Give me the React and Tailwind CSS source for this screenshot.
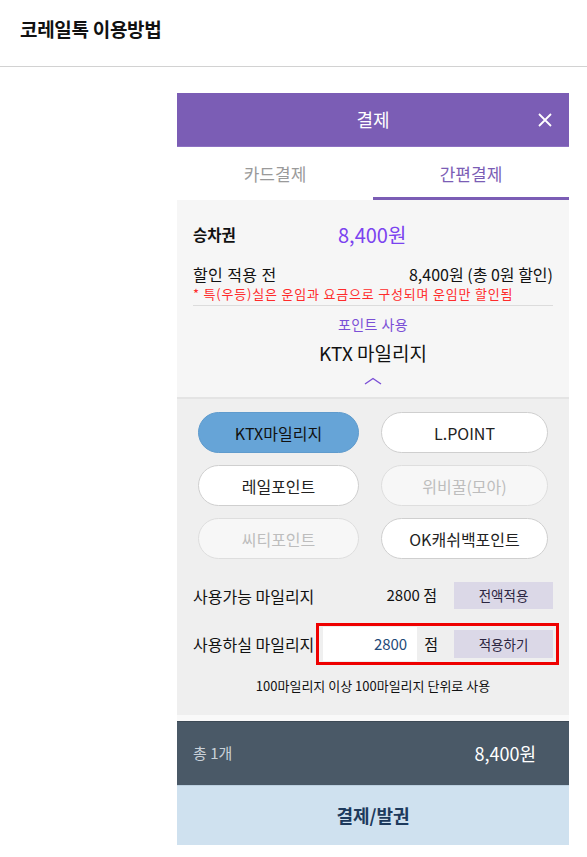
import React from "react";

const font = { fontFamily: '"Noto Sans CJK KR", "Noto Sans", sans-serif' };

function PointButton({ label, active, disabled }) {
  let cls = "bg-white border-[#cfcfcf] text-[#222]";
  if (active) cls = "bg-[#66a4d7] border-[#5f9bcd] text-[#111]";
  if (disabled) cls = "bg-[#f7f7f7] border-[#dedede] text-[#bdbdbd]";
  return (
    <div className={"h-[41px] rounded-full border flex items-center justify-center text-[16px] " + cls}>
      {label}
    </div>
  );
}

export default function App() {
  return (
    <div className="bg-white min-h-[857px] w-[587px]" style={font}>
      <div className="h-[67px] border-b border-[#d2d2d2] pl-[20px] pt-[14px]">
        <h1 className="text-[19px] font-bold text-[#111] leading-[30px] tracking-[-0.3px]">코레일톡 이용방법</h1>
      </div>

      <div className="mt-[26px] ml-[177px] w-[392px]">
        <div className="h-[54px] bg-[#7b5db5] border-b border-[#8d72c2] flex items-center justify-center relative">
          <span className="text-white text-[18px]">결제</span>
          <svg className="absolute right-[16px] top-[19px]" width="16" height="16" viewBox="0 0 16 16">
            <path d="M2 2 L14 14 M14 2 L2 14" stroke="white" strokeWidth="1.8" />
          </svg>
        </div>

        <div className="h-[53px] bg-white flex">
          <div className="flex-1 flex items-center justify-center text-[17px] text-[#9a9a9a]">카드결제</div>
          <div className="flex-1 flex items-center justify-center text-[17px] text-[#7b5db5] border-b-[3px] border-[#7b5db5] pt-[3px]">간편결제</div>
        </div>

        <div className="bg-[#f6f6f6] px-4 pt-[20px] pb-[12px] border-b-2 border-[#e4e4e4]">
          <div className="flex items-center h-[30px]">
            <span className="text-[15.5px] font-bold text-[#111] w-[145px]">승차권</span>
            <span className="text-[20px] text-[#7b43f0]">8,400원</span>
          </div>
          <div className="flex items-center justify-between mt-[14px] h-[20px] text-[16px] text-[#111]">
            <span className="tracking-[0.4px]">할인 적용 전</span>
            <span>8,400원 (총 0원 할인)</span>
          </div>
          <div className="text-[13px] text-[#ff2b2b] leading-[18px] tracking-[0.8px] mt-[1px]">* 특(우등)실은 운임과 요금으로 구성되며 운임만 할인됨</div>
          <div className="border-b border-[#dcdcdc] mt-[2px]"></div>
          <div className="text-center text-[14px] text-[#7b4fd6] mt-[9px] leading-[18px] tracking-[0.4px]">포인트 사용</div>
          <div className="text-center text-[19px] text-[#111] mt-[7px] leading-[26px]">KTX 마일리지</div>
          <div className="flex justify-center pt-[11px]">
            <svg width="18" height="8" viewBox="0 0 18 8">
              <path d="M1 7 L9 1.5 L17 7" fill="none" stroke="#7b4fd6" strokeWidth="1.4" />
            </svg>
          </div>
        </div>

        <div className="bg-[#efefef] px-4 pt-[13px] pb-[20px]">
          <div className="grid grid-cols-[161px_167px] gap-x-[22px] gap-y-[12px] px-[5px]">
            <PointButton label="KTX마일리지" active />
            <PointButton label="L.POINT" />
            <PointButton label="레일포인트" />
            <PointButton label="위비꿀(모아)" disabled />
            <PointButton label="씨티포인트" disabled />
            <PointButton label="OK캐쉬백포인트" />
          </div>

          <div className="flex items-center h-[27px] mt-[23px]">
            <span className="flex-1 text-[16px] text-[#111]">사용가능 마일리지</span>
            <span className="text-[15px] text-[#111]">2800 점</span>
            <div className="ml-[17px] w-[99px] h-[27px] bg-[#dbd8e7] flex items-center justify-center text-[13.5px] text-[#2b2540]">전액적용</div>
          </div>
          <div className="flex items-center mt-[14px]">
            <span className="flex-1 text-[16px] text-[#111]">사용하실 마일리지</span>
            <div className="-mr-[6px] flex items-center border-[3px] border-[#ee0000] pl-[4px] pr-[3px] py-[1px]">
              <div className="w-[94px] h-[34px] bg-white flex items-center justify-end pr-[10px] text-[15px] text-[#234a78]">2800</div>
              <span className="ml-[7px] text-[15px] text-[#111]">점</span>
              <div className="ml-[16px] w-[99px] h-[28px] bg-[#dbd8e7] flex items-center justify-center text-[13.5px] text-[#2b2540]">적용하기</div>
            </div>
          </div>
          <div className="text-center text-[13px] text-[#111] mt-[12px] leading-[18px]">100마일리지 이상 100마일리지 단위로 사용</div>
        </div>

        <div className="h-[6px] bg-[#f9f9f9]"></div>

        <div className="h-[64px] bg-[#4a5967] border-t border-[#3d4a56] flex items-center justify-between pl-4 pr-[33px]">
          <span className="text-[15px] text-[#c9d1d9]">총 1개</span>
          <span className="text-[18px] text-white">8,400원</span>
        </div>

        <div className="h-[60px] bg-[#cfe1ef] flex items-center justify-center border-t border-[#bcd0e0]">
          <span className="text-[18px] font-bold text-[#1d3a5c]">결제/발권</span>
        </div>
      </div>
    </div>
  );
}
